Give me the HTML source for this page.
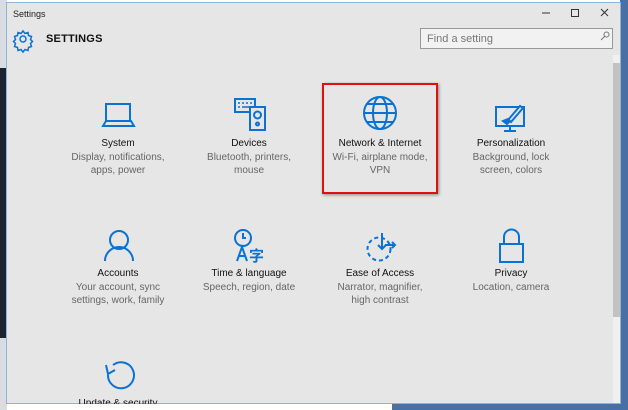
<!DOCTYPE html>
<html><head><meta charset="utf-8"><style>
*{margin:0;padding:0;box-sizing:border-box}
body{width:628px;height:410px;position:relative;overflow:hidden;background:#fff;font-family:"Liberation Sans",sans-serif}
.abs{position:absolute}
.t{position:absolute;width:130px;text-align:center;font-size:10px;color:#111}
.s{position:absolute;width:130px;text-align:center;font-size:10px;color:#666;line-height:13px}
svg{position:absolute;left:0;top:0}
</style></head><body>
<div class="abs" style="left:0;top:0;width:7px;height:410px;background:#d8dde4"></div>
<div class="abs" style="left:0;top:68px;width:7px;height:270px;background:#1c2430"></div>
<div class="abs" style="left:392px;top:404px;width:236px;height:6px;background:#4a6fa5"></div>
<div class="abs" style="left:620px;top:0;width:8px;height:410px;background:#4a6fa5"></div>
<div class="abs" style="left:6px;top:2px;width:615px;height:402px;background:#e6e6e6;border:1px solid #8fb4dc"></div>
<div class="abs" style="left:13px;top:9px;font-size:9px;color:#222">Settings</div>
<div class="abs" style="left:46px;top:33px;font-size:11px;font-weight:bold;color:#111;letter-spacing:0.2px">SETTINGS</div>
<div class="abs" style="left:420px;top:28px;width:193px;height:21px;border:1px solid #999;background:#f2f2f2;font-size:11px;color:#777;padding:4px 0 0 6px">Find a setting</div>
<div class="abs" style="left:613px;top:55px;width:7px;height:348px;background:#f0f0f0"></div>
<div class="abs" style="left:613px;top:63px;width:7px;height:254px;background:#c2c2c2"></div>
<div class="abs" style="left:322px;top:83px;width:116px;height:111px;border:2px solid #e01010;box-shadow:1px 1px 3px rgba(0,0,0,.4)"></div>

<div class="t" style="left:53px;top:138px">System</div>
<div class="s" style="left:53px;top:151px">Display, notifications,<br>apps, power</div>
<div class="t" style="left:184px;top:138px">Devices</div>
<div class="s" style="left:184px;top:151px">Bluetooth, printers,<br>mouse</div>
<div class="t" style="left:315px;top:138px">Network &amp; Internet</div>
<div class="s" style="left:315px;top:151px">Wi-Fi, airplane mode,<br>VPN</div>
<div class="t" style="left:446px;top:138px">Personalization</div>
<div class="s" style="left:446px;top:151px">Background, lock<br>screen, colors</div>
<div class="t" style="left:53px;top:268px">Accounts</div>
<div class="s" style="left:53px;top:281px">Your account, sync<br>settings, work, family</div>
<div class="t" style="left:184px;top:268px">Time &amp; language</div>
<div class="s" style="left:184px;top:281px">Speech, region, date</div>
<div class="t" style="left:315px;top:268px">Ease of Access</div>
<div class="s" style="left:315px;top:281px">Narrator, magnifier,<br>high contrast</div>
<div class="t" style="left:446px;top:268px">Privacy</div>
<div class="s" style="left:446px;top:281px">Location, camera</div>

<svg width="628" height="410" fill="none" stroke="#0a72d2" stroke-width="2">
<g stroke="#333" stroke-width="1"><path d="M542 13h8"/><rect x="571.5" y="9.5" width="7" height="7"/><path d="M601 9l7 7M608 9l-7 7"/></g>
<path d="M605 36l-4 4" stroke="#777" stroke-width="1"/><circle cx="606.5" cy="34.5" r="2.5" stroke="#777" stroke-width="1"/>
<g stroke-width="1.5"><circle cx="23" cy="39" r="3"/><path d="M23 31l2 2.5 3-1 .5 3 3 1-1 3 2 2-2 2 1 3-3 1-.5 3-3-1-2 2.5-2-2.5-3 1-.5-3-3-1 1-3-2-2 2-2-1-3 3-1 .5-3 3 1z"/></g>
<rect x="106" y="104" width="24" height="17"/><path d="M103 126h31l-3-5h-25z"/>
<rect x="235" y="99" width="20" height="13"/><g stroke-width="1.5"><path d="M238 103h2M242 103h2M246 103h2M250 103h2M238 107h2M242 107h12"/></g>
<rect x="250" y="107" width="15" height="23" fill="#e6e6e6"/><circle cx="257.5" cy="115" r="3.5"/><circle cx="257.5" cy="124" r="1.5"/>
<circle cx="380" cy="113" r="16"/><ellipse cx="380" cy="113" rx="7" ry="16"/><path d="M364 113h32M367 104h26M367 122h26"/>
<rect x="496" y="107" width="28" height="19"/><path d="M510 126v4M504 131h12"/><path d="M508 120l12-14 3 2-12 14z" fill="#e6e6e6"/><path d="M503 121l5-2 2 2-3 3z" fill="#0a72d2"/>
<circle cx="119" cy="240" r="9"/><path d="M105 261a14 14 0 0 1 28 0"/>
<circle cx="243" cy="238" r="8" fill="#e6e6e6"/><path d="M243 233v5h3"/><path d="M237 261l5-14 5 14M239 256h6" fill="#e6e6e6"/>
<text x="249" y="261" stroke="none" fill="#0a72d2" font-size="15" font-weight="bold" font-family="Noto Sans CJK SC, sans-serif">字</text>
<circle cx="379" cy="249" r="11.5" stroke-dasharray="4 3"/><path d="M382 233v16M378 245l4 4 4-4M385 245h10M392 242l3 3-3 3"/>
<rect x="500" y="244" width="23" height="18"/><path d="M504 244v-7a7.5 7.5 0 0 1 15 0v7"/>
<path d="M108 375a13 13 0 1 0 5-10" /><path d="M106 365l2 9 7-4" stroke-width="2"/>
</svg>
<div class="t" style="left:53px;top:399px;height:5px;overflow:hidden;line-height:10px">Update &amp; security</div>
</body></html>
